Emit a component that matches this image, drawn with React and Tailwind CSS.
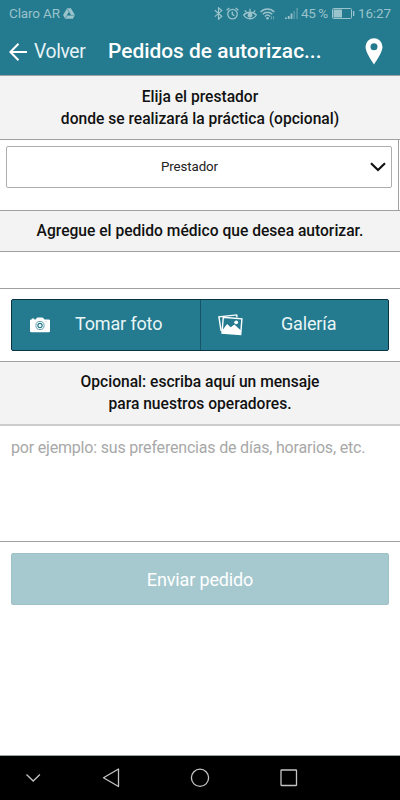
import { clsx } from 'clsx';

function DriveIcon() {
  return (
    <svg width="12" height="11" viewBox="0 0 12 11" fill="currentColor">
      <path fillRule="evenodd" d="M4.1.2h3.8L11.9 7 9.9 10.800H2.100L.1 7zM6 3.700 3.700 7.600h4.600z" />
      <path d="M4.200.6 6.200 4M11.400 7.400H8M2.300 10.400l1.700-2.900" fill="none" stroke="#247a8e" strokeWidth=".5" />
    </svg>
  );
}

function BluetoothIcon() {
  return (
    <svg width="9" height="13" viewBox="0 0 9 13" fill="none" stroke="currentColor" strokeWidth="1.200">
      <path d="m.8 3.300 7 6-3.300 3V.8l3.300 2.800-7 6" />
    </svg>
  );
}

function AlarmIcon() {
  return (
    <svg width="13" height="13" viewBox="0 0 13 13" fill="none" stroke="currentColor" strokeWidth="1.300">
      <circle cx="6.500" cy="7.100" r="4.800" />
      <path d="M6.300 4.400v3l2.200 1.300M.6 3.200 3.400.9M12.400 3.200 9.600.9" />
    </svg>
  );
}

function EyeIcon() {
  return (
    <svg width="14" height="12" viewBox="0 0 14 12" fill="none" stroke="currentColor" strokeWidth="1.300">
      <path d="M.7 7C3.500 3.300 10.500 3.300 13.300 7c-2.800 5-9.800 5-12.600 0zM7 4V.7M3.500 4.600 1.800 2.300M10.500 4.600l1.700-2.300" />
      <circle cx="7" cy="7.200" r="1.800" fill="currentColor" />
    </svg>
  );
}

function WifiIcon() {
  return (
    <svg width="15" height="12" viewBox="0 0 15 12" fill="none" stroke="currentColor" strokeWidth="1.400">
      <path d="M.6 4.100c4-4.100 9.800-4.100 13.800 0M2.700 6.300c2.800-2.800 6.800-2.800 9.600 0M4.800 8.400c1.600-1.600 3.800-1.600 5.400 0" />
      <circle cx="7.500" cy="10.300" r="1.300" fill="currentColor" stroke="none" />
      <path d="M11.400 8.200v3.200M13.600 8.200v3.200" strokeWidth=".9" opacity=".7" />
    </svg>
  );
}

function SignalIcon() {
  return (
    <svg width="13" height="12" viewBox="0 0 13 12" fill="currentColor">
      <path d="M0 9.500h1.800V11H0zM2.800 8h1.800v3H2.800zM5.600 5.500h1.800V11H5.600z" />
      <path d="M8.400 3h1.700v8H8.400zM11.200 0h1.700v11h-1.700z" opacity=".4" />
    </svg>
  );
}

function BatteryIcon() {
  return (
    <svg width="23" height="11" viewBox="0 0 23 11" fill="currentColor">
      <rect x=".5" y=".5" width="19" height="10" rx="1" fill="none" stroke="currentColor" />
      <path d="M1.500 1.500h8.500v8H1.500zM21 3h1.300v5H21z" />
    </svg>
  );
}

function CameraIcon() {
  return (
    <svg width="20" height="16" viewBox="0 0 20 16">
      <path fill="#fff" d="M1.200 2.400h.6v-.8h2.400v.8h1.300L7 .8Q7.300.4 7.800.4h4.400q.5 0 .8.400l1.500 1.600h4.300q1.200 0 1.200 1.200v10.500q0 1.200-1.200 1.200H1.200Q0 15.300 0 14.100V3.600q0-1.200 1.200-1.200z" />
      <circle cx="10" cy="8.500" r="4.100" fill="none" stroke="#247a8e" strokeWidth=".7" />
      <circle cx="10" cy="8.500" r="2.100" fill="none" stroke="#247a8e" strokeWidth="1.200" />
      <circle cx="16" cy="4.500" r=".4" fill="#247a8e" />
    </svg>
  );
}

function GalleryIcon() {
  return (
    <svg width="25" height="22" viewBox="0 0 25 22">
      <path d="M4.300 16.800 3 16.200.9 2.900 18.700.9l.3 2.400" fill="none" stroke="#fff" strokeWidth="1.400" />
      <path d="m5.300 3.300 18.600 1.500-1.200 15.600L4 19z" fill="#247a8e" stroke="#fff" strokeWidth="1.400" />
      <path d="m4.200 16.500 4.900-6.500 3.600 3.200 3.700-2.700 6.800 6.300-.4 3.600L4 19z" fill="#fff" />
      <circle cx="18.200" cy="8.300" r="1.900" fill="#fff" />
    </svg>
  );
}

function StatusBar() {
  return (
    <div className="flex h-7 items-center pb-px pl-[9px] text-[13.5px] tracking-[-0.15px] text-[#9ac3cc]">
      <span className="w-[54px] whitespace-nowrap">Claro AR</span>
      <DriveIcon />
      <div className="ml-[139px] flex items-center">
        <BluetoothIcon />
        <span className="ml-[3px]"><AlarmIcon /></span>
        <span className="ml-1"><EyeIcon /></span>
        <span className="ml-[3px]"><WifiIcon /></span>
        <span className="ml-[10px]"><SignalIcon /></span>
      </div>
      <span className="ml-[3px] w-[31px] whitespace-nowrap tracking-[-0.45px]">45 %</span>
      <BatteryIcon />
      <span className="ml-[3px] whitespace-nowrap">16:27</span>
    </div>
  );
}

function Header() {
  return (
    <header className="flex h-12 items-center pl-[9px] pb-px text-white">
      <svg width="18" height="18" viewBox="0 0 18 18" fill="none" stroke="currentColor" strokeWidth="2">
        <path d="M9.500 .8 1.400 9l8.100 8.200M1.400 9H18" />
      </svg>
      <span className="ml-[7px] w-[74px] pt-px text-[19.3px] tracking-[-0.35px] text-[#e4f3f6]">Volver</span>
      <h1 className="w-[257px] whitespace-nowrap pt-px text-[20.9px] font-medium">Pedidos de autorizac...</h1>
      <svg width="18" height="27" viewBox="0 0 18 27" fill="currentColor">
        <path fillRule="evenodd" d="M9 .3a8.500 8.500 0 0 1 8.500 8.500C17.500 14 12 22 9 26.500 6 22 .5 14 .5 8.800A8.500 8.500 0 0 1 9 .3zm0 5a3.500 3.500 0 1 0 0 7 3.500 3.500 0 0 0 0-7z" />
      </svg>
    </header>
  );
}

function SectionTitle({ className, children }) {
  return (
    <h2 className={clsx('flex flex-col items-center justify-center border-y border-[#a0a0a0] bg-[#f3f3f3] text-[15.6px] leading-[22px] font-medium text-[#111]', className)}>
      {children}
    </h2>
  );
}

function NavBar() {
  return (
    <nav className="flex h-[45px] items-center border-t border-[#9aa5a6] bg-black">
      <svg width="400" height="44" viewBox="0 0 400 44" fill="none" stroke="#c4c4c4" strokeWidth="1.300">
        <path d="m26.500 18.500 6.700 6.500 6.700-6.500" />
        <path d="M118.500 13v17.500L103.500 21.700z" strokeLinejoin="round" />
        <circle cx="200" cy="21.800" r="8.600" />
        <rect x="281" y="14" width="15.500" height="15.500" rx=".5" />
      </svg>
    </nav>
  );
}

export default function App() {
  return (
    <div className="flex h-[800px] w-[400px] flex-col overflow-hidden bg-white font-['Roboto',sans-serif]">
      <div className="h-[75px] shrink-0 bg-[#247a8e]">
        <StatusBar />
        <Header />
      </div>

      <SectionTitle className="h-[65px] shrink-0 pt-px">
        <span>Elija el prestador</span>
        <span>donde se realizará la práctica (opcional)</span>
      </SectionTitle>
      <div className="mr-px h-[70px] shrink-0 border-r border-[#a0a0a0] pt-[6px] pl-[6px]">
        <button className="flex h-[42px] w-[386px] items-center rounded-xs border border-[#adadad] pl-[154px] text-[13.3px] tracking-[-0.1px] text-[#222]">
          <span className="w-[209px] text-left">Prestador</span>
          <svg width="16" height="10" viewBox="0 0 16 10" fill="none" stroke="#111" strokeWidth="2.200">
            <path d="m1 1.300 7 6.700 7-6.700" />
          </svg>
        </button>
      </div>

      <SectionTitle className="h-[42px] shrink-0">
        <span>Agregue el pedido médico que desea autorizar.</span>
      </SectionTitle>
      <div className="h-[37px] shrink-0 border-b border-[#a0a0a0]" />

      <div className="h-[72px] shrink-0 px-[11px] pt-[10px]">
        <div className="flex h-[52px] rounded-xs border border-[#0d3444] bg-[#247a8e] text-[18px] tracking-[-0.15px] text-[#e8f6f8]">
          <button className="flex w-[189px] items-center border-r border-[#145668] pb-[4px] pl-[18px]">
            <span className="mt-[3px]"><CameraIcon /></span>
            <span className="ml-[25px] whitespace-nowrap">Tomar foto</span>
          </button>
          <button className="flex flex-1 items-center pb-[4px] pl-[17px]">
            <span className="mt-[3px]"><GalleryIcon /></span>
            <span className="ml-[38px] whitespace-nowrap">Galería</span>
          </button>
        </div>
      </div>

      <SectionTitle className="h-[65px] shrink-0 border-b-2 border-b-[#cccccc]">
        <span>Opcional: escriba aquí un mensaje</span>
        <span>para nuestros operadores.</span>
      </SectionTitle>
      <textarea
        className="block h-[116px] w-full shrink-0 resize-none border-b border-[#a0a0a0] px-[11px] pt-[11px] text-[16px] leading-[22px] tracking-[-0.19px] outline-none placeholder:text-[#a8a8a8]"
        placeholder="por ejemplo: sus preferencias de días, horarios, etc."
      />

      <div className="flex-1 px-[11px] pt-[11px]">
        <button className="h-[52px] w-full rounded-xs border border-[#9fc1c8] bg-[#a6c9cf] text-[18px] tracking-[-0.15px] text-white" disabled>
          Enviar pedido
        </button>
      </div>
      <NavBar />
    </div>
  );
}
